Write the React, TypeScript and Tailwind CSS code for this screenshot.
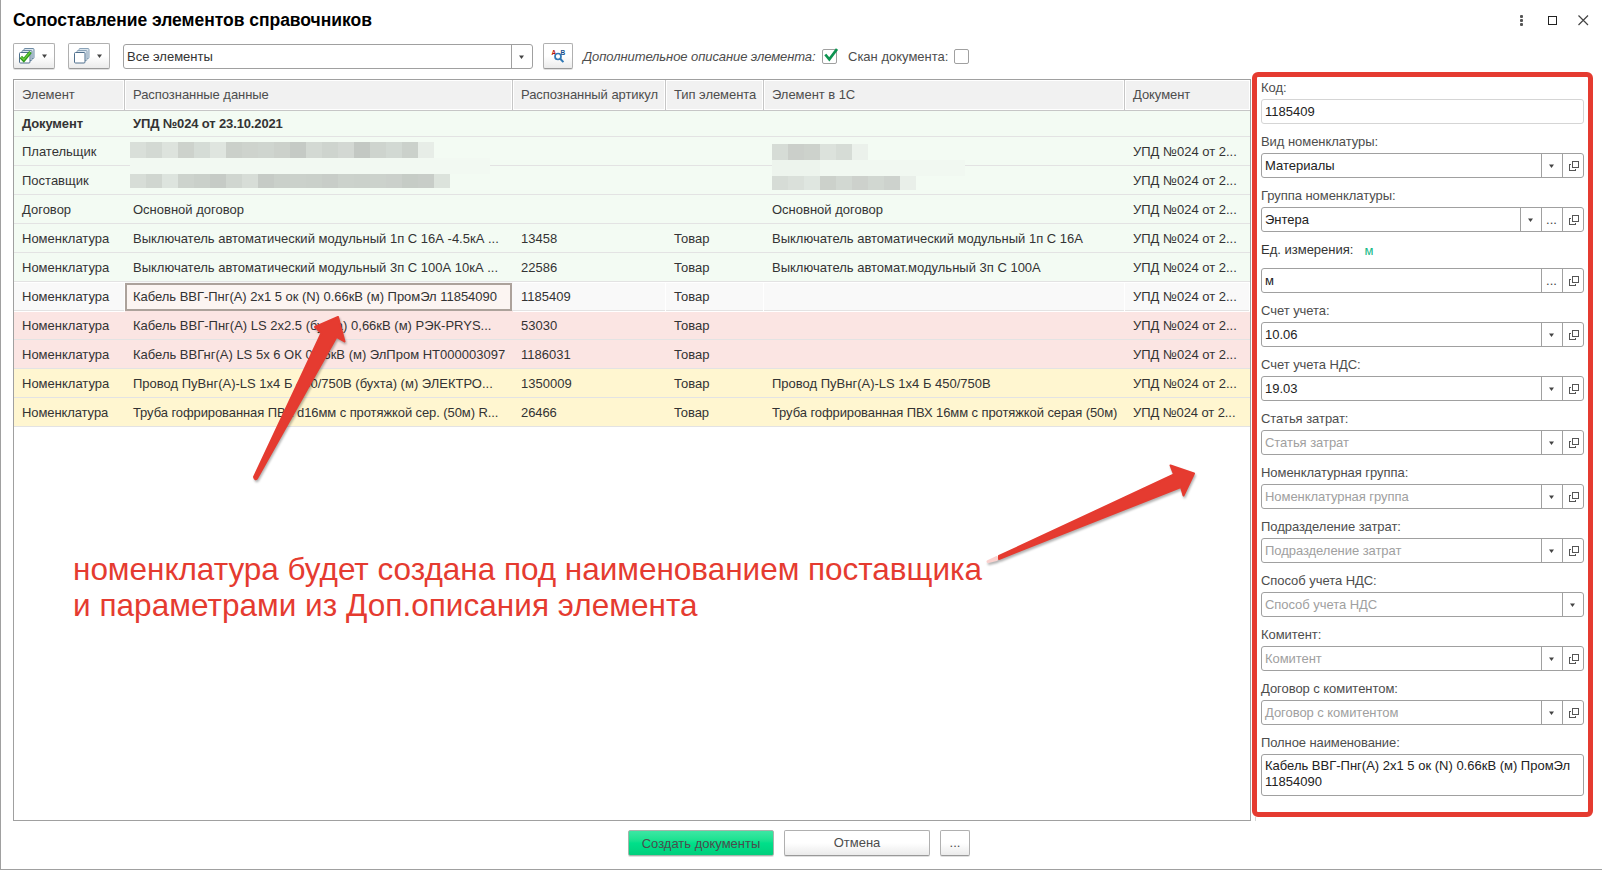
import React from "react";

interface Row {
    kind: string;
    data: string;
    article?: string;
    type?: string;
    element?: string;
    doc?: string;
    color: string;
    bold?: boolean;
    selected?: boolean;
    tight?: boolean;
}

interface FieldProps {
    label: string;
    value?: string;
    placeholder?: string;
    buttons?: string[];
}

const docName = 'УПД №024 от 2...';
const green = 'bg-[#f3fbf3]';
const pink = 'bg-[#fbe5e3]';
const yellow = 'bg-[#fff6d0]';

// Table rows
const rows: Row[] = [
    { kind: 'Документ', data: 'УПД №024 от 23.10.2021', color: green, bold: true },
    { kind: 'Плательщик', data: '', doc: docName, color: green },
    { kind: 'Поставщик', data: '', doc: docName, color: green },
    { kind: 'Договор', data: 'Основной договор', element: 'Основной договор', doc: docName, color: green },
    { kind: 'Номенклатура', data: 'Выключатель автоматический модульный 1п С 16А -4.5кА ...', article: '13458', type: 'Товар', element: 'Выключатель автоматический модульный 1п С 16А', doc: docName, color: green },
    { kind: 'Номенклатура', data: 'Выключатель автоматический модульный 3п С 100А 10кА ...', article: '22586', type: 'Товар', element: 'Выключатель автомат.модульный 3п С 100А', doc: docName, color: green },
    { kind: 'Номенклатура', data: 'Кабель ВВГ-Пнг(А) 2х1 5 ок (N) 0.66кВ (м) ПромЭл 11854090', article: '1185409', type: 'Товар', doc: docName, color: 'bg-[#f9f9f9]', selected: true },
    { kind: 'Номенклатура', data: 'Кабель ВВГ-Пнг(А) LS 2х2.5 (бухта) 0,66кВ (м) РЭК-PRYS...', article: '53030', type: 'Товар', doc: docName, color: pink },
    { kind: 'Номенклатура', data: 'Кабель ВВГнг(А) LS 5х 6 ОК 0,66кВ (м) ЭлПром НТ000003097', article: '1186031', type: 'Товар', doc: docName, color: pink },
    { kind: 'Номенклатура', data: 'Провод ПуВнг(А)-LS 1х4 Б 450/750В (бухта) (м) ЭЛЕКТРО...', article: '1350009', type: 'Товар', element: 'Провод ПуВнг(А)-LS 1х4 Б 450/750В', doc: docName, color: yellow },
    { kind: 'Номенклатура', data: 'Труба гофрированная ПВХ d16мм с протяжкой сер. (50м) R...', article: '26466', type: 'Товар', element: 'Труба гофрированная ПВХ 16мм с протяжкой серая (50м)', doc: docName, color: yellow, tight: true },
];

const headers = ['Элемент', 'Распознанные данные', 'Распознанный артикул', 'Тип элемента', 'Элемент в 1С', 'Документ'];

const columns = 'grid grid-cols-[111px_388px_153px_98px_361px_125px]';

// Shades of the blocks that hide the company names
const payerBlocks = ['#d9dfd9', '#d3d9d3', '#dde3dd', '#cdd2cc', '#d5dcd6', '#dfe5df', '#cbd0ca', '#ced3cd', '#cfd5cf', '#ccd1cb', '#c5cac5', '#d3d9d3', '#ced4ce', '#d3d8d3', '#c3c8c3', '#ced4ce', '#d2d9d3', '#cbd1cb', '#e7ede7'];
const supplierBlocks = ['#d7ddd7', '#d0d6d0', '#dde4de', '#cdd3cd', '#cad0ca', '#c6cbc6', '#d0d6d0', '#d7ddd7', '#c6cbc6', '#cad0ca', '#cbd1cb', '#cad0ca', '#c8cdc8', '#ccd2cc', '#cbd1cb', '#ccd2cc', '#cbd0cb', '#c6ccc6', '#c8cdc8', '#dce3dc'];
const payerShort = ['#d6dcd6', '#cbcfca', '#cdd2cc', '#dce2dc', '#d6dcd6', '#ebf1eb'];
const supplierShort = ['#d6dcd6', '#dae0da', '#dfe6e0', '#ccd1cb', '#d2d8d2', '#cdd1cc', '#d1d7d1', '#cdd2cd', '#e9efe9'];

function Caret() {
    return (
        <svg className="mr-[2px]" width="5" height="4" viewBox="0 0 5 4">
            <path d="M0 0.5h5L2.5 4z" fill="#444" />
        </svg>
    );
}

function OpenIcon() {
    return (
        <svg className="ml-px" width="10" height="10" viewBox="0 0 10 10" fill="none" stroke="#555" shapeRendering="crispEdges">
            <path d="M3.5 0.5h6v6h-6z" />
            <path d="M2 3.5H0.5v6h6V8" />
        </svg>
    );
}

function Blocks({ shades, tall }: { shades: string[]; tall?: boolean }) {
    return (
        <div className={tall ? 'flex h-4' : 'flex h-[14px]'}>
            {shades.map((shade, i) => <span key={i} className="w-4" style={{ backgroundColor: shade }} />)}
        </div>
    );
}

function Field({ label, value, placeholder, buttons = ['list', 'open'] }: FieldProps) {
    return (
        <div>
            <div className="flex h-[29px] items-end leading-[22px] tracking-[-0.05px] text-[#4d4d4d]">{label}</div>
            <FieldBox value={value} placeholder={placeholder} buttons={buttons} />
        </div>
    );
}

function FieldBox({ value, placeholder, buttons }: { value?: string; placeholder?: string; buttons: string[] }) {
    return (
        <div className="flex h-[25px] rounded-[3px] border border-[#a0a0a0] bg-white">
            <div className={value ? 'flex-1 pl-[3px] leading-[23px] text-[#222]' : 'flex-1 pl-[3px] leading-[23px] tracking-[-0.05px] text-[#a0a0a0]'}>
                {value ?? placeholder}
            </div>
            {buttons.map((button) => (
                <div key={button} className="flex w-[21px] items-center justify-center border-l border-[#a0a0a0] text-[#444]">
                    {button === 'list' && <Caret />}
                    {button === 'more' && <span className="mr-px leading-[20px]">...</span>}
                    {button === 'open' && <OpenIcon />}
                </div>
            ))}
        </div>
    );
}

const toolButton = 'flex h-[26px] items-center justify-center rounded-[2px] border border-[#b0b0b0] border-b-[#999] bg-linear-to-b from-white from-50% to-[#ebebeb] shadow-[0_1px_0_rgba(0,0,0,0.12)]';

export default function App() {
    return (
        <div className="relative flex h-[870px] w-[1602px] flex-col overflow-hidden border-b border-l border-[#a0a0a0] bg-white font-['Liberation_Sans',Arial,sans-serif] text-[13px] whitespace-nowrap text-[#333]">
            {/* Title bar */}
            <div className="flex h-[43px] justify-between pr-[13px] pl-3">
                <h1 className="text-[17.5px] leading-[41px] font-bold tracking-[-0.03px] text-black">Сопоставление элементов справочников</h1>
                <svg className="mt-[14px]" width="70" height="13" viewBox="0 0 70 13" fill="none">
                    <g fill="#555">
                        <rect x="1" y="1" width="3" height="3" rx="1" />
                        <rect x="1" y="5" width="3" height="3" rx="1" />
                        <rect x="1" y="9" width="3" height="3" rx="1" />
                    </g>
                    <rect x="29.5" y="2.5" width="8" height="8" stroke="#222" />
                    <path d="M59.5 1.5l9.5 9.5M69 1.5l-9.5 9.5" stroke="#444" strokeWidth="1.2" />
                </svg>
            </div>

            {/* Toolbar */}
            <div className="flex h-[29px] items-start pl-3">
                <div className={`${toolButton} w-[42px] gap-[7px]`}>
                    <svg width="16" height="16" viewBox="0 0 16 16" fill="#dbe6ee" stroke="#6d8aa3">
                        <rect x="5" y="0.5" width="10" height="10" rx="1" />
                        <rect x="3" y="2.5" width="10" height="10" rx="1" />
                        <rect x="0.5" y="4.5" width="10.5" height="10.5" rx="1" fill="#fff" stroke="#4f6f8c" />
                        <path d="M1.8 9l3 3.2L11.5 4" fill="none" stroke="#2f9a1c" strokeWidth="3.4" />
                        <path d="M2.2 9.2l2.6 2.4L11 4.4" fill="none" stroke="#6ccc3c" strokeWidth="1.3" />
                    </svg>
                    <Caret />
                </div>
                <div className={`${toolButton} ml-[13px] w-[42px] gap-[7px]`}>
                    <svg width="16" height="16" viewBox="0 0 16 16" fill="#dbe6ee" stroke="#8ba3b8">
                        <rect x="5" y="0.5" width="10" height="10" rx="1" />
                        <rect x="3" y="2.5" width="10" height="10" rx="1" />
                        <rect x="0.5" y="4.5" width="10.5" height="10.5" rx="1" fill="#fff" stroke="#4f6f8c" />
                    </svg>
                    <Caret />
                </div>
                <div className="mt-px ml-[13px] flex h-[25px] w-[410px] rounded-[3px] border border-[#a0a0a0]">
                    <div className="flex-1 pl-[3px] leading-[23px]">Все элементы</div>
                    <div className="flex w-[21px] items-center justify-center border-l border-[#a0a0a0]"><Caret /></div>
                </div>
                <div className={`${toolButton} ml-[10px] w-[30px]`}>
                    <svg width="15" height="15" viewBox="0 0 15 15">
                        <text x="0.5" y="6" fontSize="6.5" fontWeight="bold" fill="#b5120c">A</text>
                        <text x="9.5" y="6" fontSize="6.5" fontWeight="bold" fill="#14508c">B</text>
                        <circle cx="7" cy="7.5" r="3" fill="none" stroke="#2f78b5" strokeWidth="1.7" />
                        <path d="M9.2 9.8l3.2 3.3" stroke="#2f78b5" strokeWidth="2" />
                    </svg>
                </div>
                <span className="ml-[10px] w-[239px] leading-[27px] tracking-[-0.08px] text-[#4d4d4d] italic">Дополнительное описание элемента:</span>
                <span className="mt-[6px] h-[15px] w-[15px] rounded-[2px] border border-[#a0a0a0]">
                    <svg className="-mt-[2px] ml-px" width="14" height="14" viewBox="0 0 14 14" fill="none">
                        <path d="M1.3 6.5l4 4.8L13 1" stroke="#0d9350" strokeWidth="2.7" />
                    </svg>
                </span>
                <span className="ml-[11px] w-[106px] leading-[27px] text-[#4d4d4d]">Скан документа:</span>
                <span className="mt-[6px] h-[15px] w-[15px] rounded-[2px] border border-[#a0a0a0]" />
            </div>

            <div className="flex h-[749px] items-start pl-3">
                {/* Table */}
                <div className="mt-[7px] h-[742px] w-[1238px] border border-[#a0a0a0]">
                    <div className={`${columns} h-[31px] border-b border-[#c6c6c6]`}>
                        {headers.map((header, i) => (
                            <div key={header} className={`border border-white bg-[#f1f1f1] pl-[7px] leading-[27px] tracking-[-0.05px] text-[#4d4d4d] ${i < 5 ? 'mr-px shadow-[1px_0_0_#c6c6c6]' : ''}`}>{header}</div>
                        ))}
                    </div>
                    {rows.map((row, i) => (
                        <div
                            key={i}
                            className={`${columns} border-b border-[#e3e3e3] ${row.color} ${row.bold ? 'h-[26px] leading-[25px] font-bold tracking-[-0.14px]' : 'h-[29px] leading-[30px]'} ${row.tight ? 'tracking-[-0.09px]' : ''}`}
                        >
                            {[row.kind, row.data, row.article, row.type, row.element, row.doc].map((text, col) => {
                                if (row.selected && col === 1) {
                                    return (
                                        <div key={col} className="my-px mr-px border-2 border-[#aca29b] bg-[#fcf5f2] pl-[6px] leading-[24px] tracking-[-0.03px]">{text}</div>
                                    );
                                }
                                return (
                                    <div key={col} className={row.selected ? 'border-y border-r border-white pl-2 leading-[28px]' : 'pl-2'}>{text}</div>
                                );
                            })}
                        </div>
                    ))}
                </div>

                {/* Additional description of the selected element */}
                <div className="relative ml-px h-[745px] w-[341px] rounded-[6px] border-[5px] border-[#e53b30] pr-[4px] pl-[4px]">
                    <div className="h-[22px] leading-[22px] text-[#4d4d4d]">Код:</div>
                    <div className="h-[25px] rounded-[3px] border border-[#d5d5d5] pl-[3px] leading-[23px] text-[#222]">1185409</div>
                    <Field label="Вид номенклатуры:" value="Материалы" />
                    <Field label="Группа номенклатуры:" value="Энтера" buttons={['list', 'more', 'open']} />
                    <div className="flex h-[36px] gap-[11px] pt-[7px] leading-[22px]">
                        <span>Ед. измерения:</span>
                        <span className="pt-px text-[#12b886]">м</span>
                    </div>
                    <FieldBox value="м" buttons={['more', 'open']} />
                    <Field label="Счет учета:" value="10.06" />
                    <Field label="Счет учета НДС:" value="19.03" />
                    <Field label="Статья затрат:" placeholder="Статья затрат" />
                    <Field label="Номенклатурная группа:" placeholder="Номенклатурная группа" />
                    <Field label="Подразделение затрат:" placeholder="Подразделение затрат" />
                    <Field label="Способ учета НДС:" placeholder="Способ учета НДС" buttons={['list']} />
                    <Field label="Комитент:" placeholder="Комитент" />
                    <Field label="Договор с комитентом:" placeholder="Договор с комитентом" />
                    <div className="flex h-[29px] items-end leading-[22px] tracking-[-0.1px] text-[#4d4d4d]">Полное наименование:</div>
                    <div className="h-[42px] rounded-[3px] border border-[#a0a0a0] pt-[3px] pl-[3px] leading-[16px] whitespace-normal text-[#222]">
                        Кабель ВВГ-Пнг(А) 2х1 5 ок (N) 0.66кВ (м) ПромЭл 11854090
                    </div>
                    <span className="absolute -bottom-[9px] -left-[2px] h-1 w-px bg-[#d5d5d5]" />
                </div>
            </div>

            {/* Bottom buttons */}
            <div className="flex gap-[10px] pt-[9px] pl-[627px] text-[#4d4d4d]">
                <div className="h-[26px] w-[146px] rounded-[2px] border border-[#a5b5ab] bg-linear-to-b from-[#3be6a3] via-[#00e08a] to-[#00cf7c] text-center leading-[25px] shadow-[0_1px_0_rgba(0,0,0,0.12)]">Создать документы</div>
                <div className={`${toolButton} w-[146px]`}>Отмена</div>
                <div className={`${toolButton} w-[30px]`}>...</div>
            </div>

            {/* Hidden company names */}
            <div className="absolute top-[142px] left-[129px]">
                <Blocks shades={payerBlocks} tall />
                <div className="h-4 w-[360px] bg-[#f2f9f2]" />
                <Blocks shades={supplierBlocks} />
            </div>
            <div className="absolute top-[144px] left-[771px]">
                <Blocks shades={payerShort} tall />
                <div className="h-4 w-[193px] bg-[#f1f8f1]">
                    <div className="h-4 w-12 bg-[#edf4ed]" />
                </div>
                <Blocks shades={supplierShort} />
            </div>

            {/* Annotations */}
            <svg className="absolute top-0 -left-px drop-shadow-[1px_2px_1px_rgba(0,0,0,0.3)]" width="1250" height="600" viewBox="0 0 1250 600" fill="#e53b30" stroke="#e53b30" strokeWidth="2" strokeLinejoin="round">
                <path d="M254 477L321.5 333L315 327L338 317L344.5 341.5L336.5 337L257 478.5Q255 480.5 254 477z" />
                <path d="M999 556L1174 474.5L1170.5 465.5L1194 473.5L1183.5 495.5L1181 487L999 559z" />
                <path d="M988 561.5L996.5 557.5V559.5z" stroke="#fad0cd" strokeWidth="3" />
            </svg>
            <p className="absolute top-[551px] left-[72px] text-[31.5px] leading-[36px] text-[#e53b30]">
                <span className="tracking-[-0.02px]">номенклатура будет создана под наименованием поставщика</span><br />
                <span className="tracking-[0.04px]">и параметрами из Доп.описания элемента</span>
            </p>
        </div>
    );
}
